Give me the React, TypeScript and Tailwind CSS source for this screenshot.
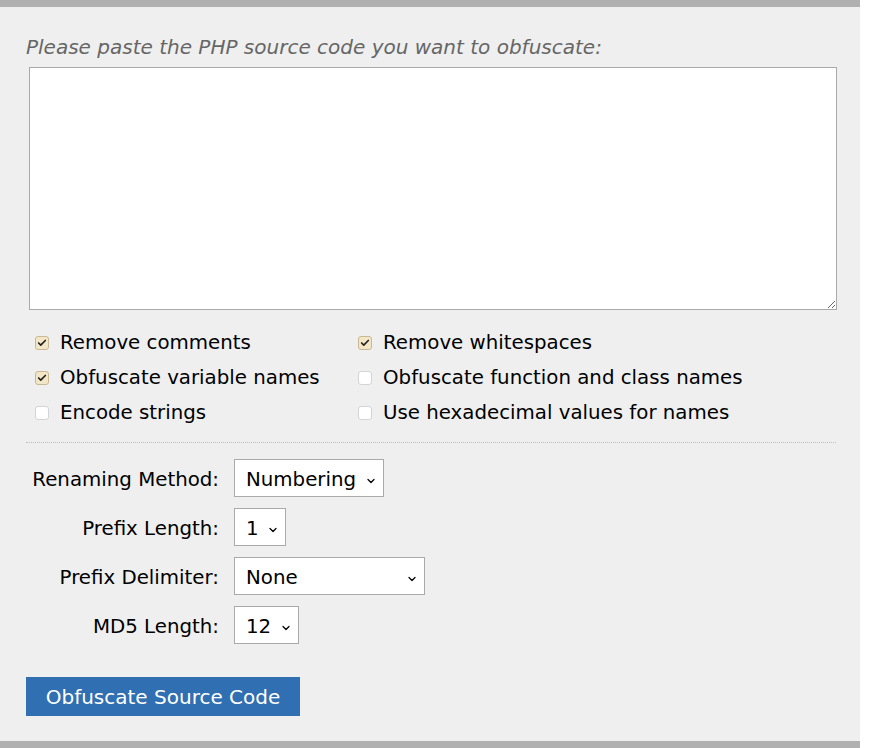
import { ChevronDown, Check } from 'lucide-react';

const options = [
  { label: 'Remove comments', checked: true },
  { label: 'Remove whitespaces', checked: true },
  { label: 'Obfuscate variable names', checked: true },
  { label: 'Obfuscate function and class names', checked: false },
  { label: 'Encode strings', checked: false },
  { label: 'Use hexadecimal values for names', checked: false },
];

const selects = [
  { label: 'Renaming Method:', value: 'Numbering', width: 'w-[150px]' },
  { label: 'Prefix Length:', value: '1', width: 'w-[52px]' },
  { label: 'Prefix Delimiter:', value: 'None', width: 'w-[191px]' },
  { label: 'MD5 Length:', value: '12', width: 'w-[65px]' },
];

function Box({ checked }: { checked: boolean }) {
  if (checked) {
    return (
      <span className="flex h-[14px] w-[14px] shrink-0 items-center justify-center rounded-[3px] border border-[#c9b894] bg-[#f3e6c7]">
        <Check className="h-[10px] w-[10px] text-[#222]" strokeWidth={4} />
      </span>
    );
  }
  return <span className="h-[14px] w-[14px] shrink-0 rounded-[3px] border border-[#d4d4d4] bg-white" />;
}

export default function App() {
  return (
    <div className="w-[874px] h-[748px] bg-white font-['DejaVu_Sans',sans-serif]">
      <div className="w-[860px] bg-[#efefef]">
        <div className="h-[7px] bg-[#b0b0b0]" />
        <div className="px-[26px] pt-[27px] pb-[25px]">
          <p className="whitespace-nowrap text-[20px] italic leading-[26px] text-[#666]">
            Please paste the PHP source code you want to obfuscate:
          </p>
          <textarea className="mt-[7px] ml-[3px] block h-[243px] w-[808px] border border-[#aaa] bg-white" />

          <div className="mt-[20px] grid grid-cols-[323px_1fr] gap-y-[9px] pl-[9px]">
            {options.map((o) => (
              <label key={o.label} className="flex h-[26px] items-center gap-[11px] whitespace-nowrap text-[19.8px] text-black">
                <Box checked={o.checked} />
                {o.label}
              </label>
            ))}
          </div>

          <div className="mt-[16px] border-t border-dotted border-[#bbb] w-[810px]" />

          <div className="mt-[16px] flex flex-col gap-[11px]">
            {selects.map((s) => (
              <div key={s.label} className="flex items-center">
                <span className="w-[193px] pt-[4px] whitespace-nowrap text-right text-[19.8px] text-black">{s.label}</span>
                <div className={`relative ml-[15px] flex h-[38px] items-center border border-[#aaa] bg-white pl-[11px] pt-[4px] text-[19.8px] text-black ${s.width}`}>
                  {s.value}
                  <ChevronDown className="absolute right-[6px] top-[15px] h-[12px] w-[12px] text-black" strokeWidth={2.5} />
                </div>
              </div>
            ))}
          </div>

          <button className="mt-[33px] h-[39px] w-[274px] bg-[#306fb1] text-[20px] text-white">
            Obfuscate Source Code
          </button>
        </div>
        <div className="h-[8px] bg-[#b0b0b0]" />
      </div>
    </div>
  );
}
